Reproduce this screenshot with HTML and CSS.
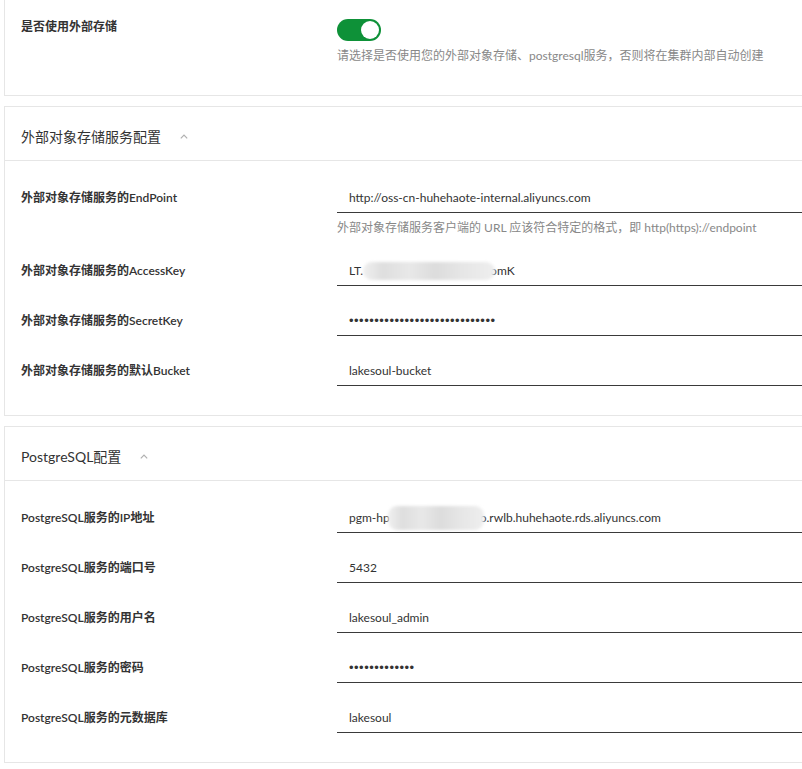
FILE: index.html
```html
<!DOCTYPE html>
<html lang="zh-CN">
<head>
<meta charset="utf-8">
<title>外部存储配置</title>
<link rel="stylesheet" href="styles.css">
</head>
<body>
<div class="page">
  <section class="card card-switch">
    <div class="row">
      <div class="label">是否使用外部存储</div>
      <div class="field">
        <span class="switch"><span class="knob"></span></span>
        <div class="help help-switch">请选择是否使用您的外部对象存储、postgresql服务，否则将在集群内部自动创建</div>
      </div>
    </div>
  </section>

  <section class="card">
    <header class="card-head">
      <span class="title">外部对象存储服务配置</span>
      <svg class="chev" width="8" height="5" viewBox="0 0 8 5"><polyline points="0.8,4.3 4,1 7.2,4.3" fill="none" stroke="#b0b0b0" stroke-width="1.2"/></svg>
    </header>
    <div class="card-body">
      <div class="row">
        <div class="label">外部对象存储服务的EndPoint</div>
        <div class="field">
          <div class="input">http://oss-cn-huhehaote-internal.aliyuncs.com</div>
          <div class="help">外部对象存储服务客户端的 URL 应该符合特定的格式，即 http(https)://endpoint</div>
        </div>
      </div>
      <div class="row">
        <div class="label">外部对象存储服务的AccessKey</div>
        <div class="field">
          <div class="input">LT.<span class="blur blur-key"></span>omK</div>
        </div>
      </div>
      <div class="row">
        <div class="label">外部对象存储服务的SecretKey</div>
        <div class="field">
          <div class="input"><span class="dots">•••••••••••••••••••••••••••••</span></div>
        </div>
      </div>
      <div class="row">
        <div class="label">外部对象存储服务的默认Bucket</div>
        <div class="field">
          <div class="input">lakesoul-bucket</div>
        </div>
      </div>
    </div>
  </section>

  <section class="card">
    <header class="card-head">
      <span class="title">PostgreSQL配置</span>
      <svg class="chev" width="8" height="5" viewBox="0 0 8 5"><polyline points="0.8,4.3 4,1 7.2,4.3" fill="none" stroke="#b0b0b0" stroke-width="1.2"/></svg>
    </header>
    <div class="card-body">
      <div class="row">
        <div class="label">PostgreSQL服务的IP地址</div>
        <div class="field">
          <div class="input">pgm-hp<span class="blur blur-ip"></span>o.rwlb.huhehaote.rds.aliyuncs.com</div>
        </div>
      </div>
      <div class="row">
        <div class="label">PostgreSQL服务的端口号</div>
        <div class="field">
          <div class="input">5432</div>
        </div>
      </div>
      <div class="row">
        <div class="label">PostgreSQL服务的用户名</div>
        <div class="field">
          <div class="input">lakesoul_admin</div>
        </div>
      </div>
      <div class="row">
        <div class="label">PostgreSQL服务的密码</div>
        <div class="field">
          <div class="input"><span class="dots">•••••••••••••</span></div>
        </div>
      </div>
      <div class="row">
        <div class="label">PostgreSQL服务的元数据库</div>
        <div class="field">
          <div class="input">lakesoul</div>
        </div>
      </div>
    </div>
  </section>

  <section class="card card-next"></section>
</div>
</body>
</html>
```

FILE: styles.css
```css
html, body {
  margin: 0;
  padding: 0;
  overflow: hidden;
  background: #fff;
}

body {
  font-family: "Lato", "Noto Sans CJK SC", sans-serif;
  font-size: 12px;
  color: #333;
}

.page {
  width: 830px;
  padding-left: 4px;
  margin-top: -1px;
  display: flex;
  flex-direction: column;
  gap: 10px;
}

.card {
  border: 1px solid #e6e6e6;
  background: #fff;
}

.card-switch {
  padding: 17px 0 30px 16px;
}

.card-switch .label {
  line-height: 20px;
}

.card-switch .field {
  padding-top: 2px;
}

.row {
  display: grid;
  grid-template-columns: 316px 1fr;
  align-items: start;
}

.label {
  font-weight: 600;
  line-height: 31px;
  color: #333;
}

.field {
  display: flex;
  flex-direction: column;
  align-items: flex-start;
}

.switch {
  display: block;
  width: 44px;
  height: 22px;
  border-radius: 11px;
  background: #0e9138;
  position: relative;
}

.knob {
  position: absolute;
  right: 2px;
  top: 2px;
  width: 18px;
  height: 18px;
  border-radius: 50%;
  background: #fff;
}

.help {
  color: #888;
  line-height: 19px;
  margin-top: 4px;
  padding-top: 1px;
  margin-bottom: -1px;
}

.help-switch {
  margin-top: 6px;
  padding-top: 0;
  margin-bottom: 0;
  line-height: 18px;
}

.card-head {
  display: flex;
  align-items: center;
  padding: 19px 16px 12px;
  line-height: 22px;
  border-bottom: 1px solid #e6e6e6;
}

.title {
  font-size: 14px;
  color: #333;
}

.chev {
  margin-left: 19px;
  margin-top: -2px;
  display: block;
}

.card-body {
  padding: 21px 0 29px 16px;
  display: flex;
  flex-direction: column;
  gap: 19px;
}

.field .input {
  align-self: stretch;
  height: 30px;
  line-height: 31px;
  padding-left: 12px;
  border-bottom: 1px solid #3a3a3a;
  color: #333;
  white-space: nowrap;
  overflow: hidden;
}

.dots {
  font-family: "Liberation Sans", sans-serif;
  font-size: 13px;
  letter-spacing: 0.5px;
  color: #333;
}

.blur {
  display: inline-block;
  vertical-align: middle;
  position: relative;
  z-index: 1;
  border-radius: 9px;
  background: linear-gradient(90deg, #f0f0f0 0%, #dedede 15%, #e8e8e8 35%, #dcdcdc 55%, #e6e6e6 75%, #eeeeee 100%);
  filter: blur(1.5px);
}

.blur-key {
  width: 132px;
  height: 18px;
  margin-right: -5px;
  margin-top: -2px;
}

.blur-ip {
  width: 96px;
  height: 24px;
  margin-left: -2px;
  margin-right: -4px;
  margin-top: -2px;
}

.card-next {
  height: 40px;
}
```
